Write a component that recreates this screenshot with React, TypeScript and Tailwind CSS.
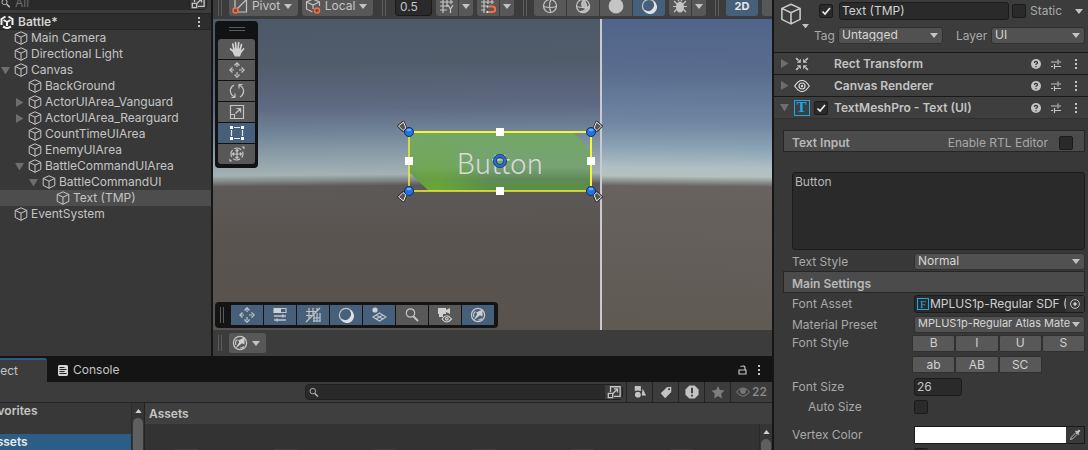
import type { ReactNode } from 'react';

const Cube = ({ className = "size-[14px]" }: { className?: string }) => (
  <svg viewBox="0 0 14 14" className={`${className} shrink-0`} fill="none" stroke="#c8c8c8" strokeLinejoin="round">
    <path d="M7 .8 12.8 3.4v7L7 13.3 1.2 10.4v-7zM1.2 3.4 7 6.2l5.8-2.8M7 6.2v7.1" />
  </svg>
);

const Down = ({ className = "w-2 text-[#c4c4c4]" }: { className?: string }) => (
  <svg viewBox="0 0 8 5" className={`${className} shrink-0`} fill="currentColor"><path d="M0 0h8L4 5z" /></svg>
);

const Fold = ({ open }: { open: boolean }) => (
  <svg viewBox="0 0 9 9" className="size-[9px] shrink-0" fill="#6e6e6e">
    <path d={open ? "M0 1h9L4.500 8.500z" : "M1 0v9l7.500-4.500z"} />
  </svg>
);

const Dots = () => (
  <svg viewBox="0 0 4 12" className="h-3 w-1 shrink-0" fill="#c4c4c4"><path d="M1 1h2v2H1zM1 5h2v2H1zM1 9h2v2H1z" /></svg>
);

const Grip = () => <div className="mx-[5px] h-4 w-1 shrink-0 border-x border-[#5c5c5c]" />;

const Icon = ({ children, className = "size-4" }: { children: ReactNode; className?: string }) => (
  <svg viewBox="0 0 16 16" className={`${className} shrink-0`} fill="none" stroke="#c4c4c4" strokeWidth="1.2">{children}</svg>
);

const Popout = () => (
  <Icon className="size-[14px]"><path d="M4 8V2h11v11H8M1.500 9.500h5v5h-5zM7 9.500 12 4.500M8 4.500h4v4" strokeWidth="1.500" /></Icon>
);

const Move = () => (
  <Icon>
    <path d="M8 2v4M8 10v4M2 8h4M10 8h4" strokeDasharray="3 1" />
    <path d="M5.500 3.500 8 .8l2.500 2.700M5.500 12.500 8 15.200l2.500-2.700M3.500 5.500.8 8l2.700 2.500M12.500 5.500 15.200 8l-2.700 2.500" />
  </Icon>
);

const Compass = () => (
  <Icon>
    <circle cx="8" cy="8" r="6.600" strokeWidth="1.300" />
    <path d="M12.500 2.500v7L10 8.200 3.500 13.500 7.200 7 6 5.500z" fill="#d0d0d0" stroke="none" />
    <path d="M4 10A4.500 4.500 0 0 1 5.500 4.500M12 11.500A5 5 0 0 1 8 13" />
  </Icon>
);

const Moon = () => (
  <Icon><circle cx="8" cy="8" r="6.600" /><path d="M12.500 3.500a6.500 6.500 0 1 1-9 9A6.500 6.500 0 0 0 12.500 3.500z" fill="#e0e0e0" stroke="#e0e0e0" /></Icon>
);

const tools = [
  { name: "View", icon: (
    <Icon>
      <path d="M5 9 3.800 3.200M7 8 6.500 1.500M9 8l.7-6.500M11 9l1.500-5.500M4.500 10.500 1.500 8M12 11l2.500-3" stroke="#d0d0d0" strokeWidth="1.700" strokeLinecap="round" />
      <path d="M4 7.500h8.200q.8 4-1.200 8H6q-2-3-2.500-5z" fill="#d0d0d0" stroke="none" />
    </Icon>
  ) },
  { name: "Move", icon: <Move /> },
  { name: "Rotate", icon: (
    <Icon><path d="M6 14A6.500 6.500 0 0 1 3 3.500L5 2M10 2a6.500 6.500 0 0 1 3 10.500L11 14M6.500 14.500H2.500M6 10.500v4M9.500 1.500h4M10 5.500v-4" /></Icon>
  ) },
  { name: "Scale", icon: (
    <Icon><path d="M1.500 1.500h13v13h-13zM1.500 10.500h4v4M6.500 9.500 11.500 4.500M7.500 4.500h4v4" /></Icon>
  ) },
  { name: "Rect", active: true, icon: (
    <Icon><path d="M5 2.500h6M5 13.500h6M2.500 5v6M13.500 5v6" stroke="#e6e6e6" /><path d="M1 1h3v3H1zM12 1h3v3h-3zM1 12h3v3H1zM12 12h3v3h-3z" fill="#fff" stroke="none" /></Icon>
  ) },
  { name: "Transform", icon: (
    <Icon><circle cx="8" cy="8" r="6" strokeDasharray="7.400 2" strokeDashoffset="3.500" /><path d="M8 3.500v9M3.500 8h9M6.500 5 8 3.500 9.500 5M6.500 11 8 12.500 9.500 11M5 6.500 3.500 8 5 9.500M11 6.500 12.500 8 11 9.500" /><path d="M12.500.5h3v3zM.5 12.500v3h3z" fill="#c4c4c4" stroke="none" /></Icon>
  ) },
];

const overlays = [
  { name: "Tools", active: true, icon: <Move /> },
  { name: "Tool Settings", active: true, icon: (
    <Icon><path d="M2 1.500h12v4H2z" /><path d="M2 1h7v5H2z" fill="#d0d0d0" stroke="none" /><path d="M2 9h12M2 13h12M11 7.500v3M5 11.500v3" strokeWidth="1.500" /></Icon>
  ) },
  { name: "Grid and Snap", active: true, icon: (
    <Icon><path d="M1 4.500h10M1 8.500h6M4 1v11M8 1v6M12 1v3M15 1 1 15M8 11h7M8 14h7M9 8v7M12 6v9M15 6v9" /></Icon>
  ) },
  { name: "Draw Modes", active: true, icon: <Moon /> },
  { name: "Gizmos", active: true, icon: (
    <Icon><circle cx="4" cy="3" r="2.600" fill="#d0d0d0" stroke="none" /><path d="M8.500 6 15 10l-6.500 4L2 10zM5 8l7 4M12 8l-7 4" /></Icon>
  ) },
  { name: "Search", active: false, icon: (
    <Icon><circle cx="6.500" cy="6" r="4.200" /><path d="m9.500 9.500 4.500 4.500" strokeWidth="2" /></Icon>
  ) },
  { name: "Cameras", active: false, icon: (
    <Icon><path d="M1 1h8v2l4-2v6L9 5v2H1zM2 7h4v3H2z" fill="#d0d0d0" stroke="none" /><path d="M5 12q4.500-6.500 9.500 0-5 6-9.500 0z" fill="#585858" stroke="#d0d0d0" /><circle cx="9.800" cy="11.800" r="1.300" stroke="#d0d0d0" /></Icon>
  ) },
  { name: "Orientation", active: true, icon: <Compass /> },
];

const shading = [
  { name: "Wireframe", active: false, icon: <Icon><circle cx="8" cy="8" r="6.500" /><path d="M1.500 8.500q6.500 2 13 0M9 1.500q-3 6.500 0 13" /></Icon> },
  { name: "Shaded Wireframe", active: false, icon: <Icon><circle cx="8" cy="8" r="6.500" /><path d="M9 1.500q-4 4-1 8 4 2 6.500-2A6.500 6.500 0 0 1 5 13.800Q12 13 11.500 7z" fill="#b5b5b5" /><path d="M1.500 8.500q6.500 2 13 0" /></Icon> },
  { name: "Unlit", active: false, icon: <Icon><circle cx="8" cy="8" r="6.800" fill="#c4c4c4" /></Icon> },
  { name: "Shaded", active: true, icon: <Moon /> },
];

const tree = [
  { name: "Main Camera", pad: "pl-0" },
  { name: "Directional Light", pad: "pl-0" },
  { name: "Canvas", pad: "pl-0", open: true },
  { name: "BackGround", pad: "pl-[14px]" },
  { name: "ActorUIArea_Vanguard", pad: "pl-[14px]", open: false },
  { name: "ActorUIArea_Rearguard", pad: "pl-[14px]", open: false },
  { name: "CountTimeUIArea", pad: "pl-[14px]" },
  { name: "EnemyUIArea", pad: "pl-[14px]" },
  { name: "BattleCommandUIArea", pad: "pl-[14px]", open: true },
  { name: "BattleCommandUI", pad: "pl-[28px]", open: true },
  { name: "Text (TMP)", pad: "pl-[42px]", selected: true },
  { name: "EventSystem", pad: "pl-0" },
];

const Hierarchy = () => (
  <section className="flex w-[211px] shrink-0 flex-col bg-[#383838]">
    <div className="flex h-[13px] items-end overflow-hidden bg-[#3c3c3c] pb-[3px]">
      <div className="flex h-4 flex-1 items-center bg-[#2a2a2a] text-[#6f6f6f]">
        <Icon className="size-3"><circle cx="6" cy="8" r="3.500" /><path d="m9 11 4 4" strokeWidth="2" /></Icon>
        <input aria-label="Search hierarchy" placeholder="All" className="w-full min-w-0 bg-transparent pl-[3px] leading-none placeholder:text-[#6f6f6f] focus:outline-none" />
      </div>
      <button aria-label="Open search" className="mr-1 flex h-4 w-[18px] items-center justify-center rounded-r border border-[#222]"><Popout /></button>
    </div>
    <div className="flex h-[17px] items-center border-y border-[#232323] bg-[#2d2d2d] pr-[10px] font-semibold text-[#d2d2d2]">
      <svg viewBox="0 0 14 14" className="size-[14px] shrink-0" fill="none" stroke="#f0f0f0" strokeWidth="2">
        <path d="M5.500 1.500 1.500 4v6M8.500 1.500l4 2.500v6M3 11.500l4 2 4-2M7 7v4M7 7 3.500 5M7 7l3.500-2" />
      </svg>
      <span className="flex-1 pl-1">Battle*</span>
      <Dots />
    </div>
    <ul>
      {tree.map((node) => (
        <li key={node.name} className={`flex h-4 items-center leading-4 ${node.pad} ${node.selected ? "bg-[#4d4d4d]" : ""}`}>
          <span className="flex w-[14px] shrink-0 pl-px">{node.open !== undefined && <Fold open={node.open} />}</span>
          <Cube />
          <span className="pl-[3px]">{node.name}</span>
        </li>
      ))}
    </ul>
  </section>
);

const SceneToolbar = () => (
  <div className="flex h-[19px] items-end overflow-hidden bg-[#3c3c3c] pb-[3px]">
    <Grip />
    <button className="ml-[2px] flex h-5 w-[69px] shrink-0 items-center justify-between rounded-[3px] bg-[#585858] pr-[6px] pl-[3px] leading-none">
      <Icon><path d="M3 1v9M6 14h8.500V1M5.500 10.500 14 2" /><circle cx="3.500" cy="12.500" r="2.500" stroke="#ff6b3d" strokeWidth="1.500" /></Icon>
      Pivot
      <Down />
    </button>
    <button className="ml-1 flex h-5 w-[71px] shrink-0 items-center justify-between rounded-[3px] bg-[#585858] pr-[6px] pl-[3px] leading-none">
      <Icon><path d="M7.500 14 1.500 11V4L8 1l6.500 3v4M1.500 4 8 7l6.500-3M8 7v4" /><circle cx="12" cy="12.500" r="2.500" stroke="#ff6b3d" strokeWidth="1.500" /></Icon>
      Local
      <Down />
    </button>
    <div className="ml-1"><Grip /></div>
    <input aria-label="Snap increment" defaultValue="0.5" className="ml-1 h-5 w-[37px] shrink-0 rounded-[3px] border border-[#1a1a1a] bg-[#2a2a2a] px-1 leading-none focus:outline-none" />
    <div className="ml-1 flex h-5 shrink-0 gap-px">
      <button aria-label="Grid" className="flex w-[22px] items-center justify-center rounded-l-[3px] bg-[#585858]">
        <Icon><path d="M1 4h13M1 8h8M1 12h7M4 1v14M8 1v8M12 1v5M9 7l2.500 4L14 7M11.500 11v4" /></Icon>
      </button>
      <button aria-label="Grid options" className="flex w-[14px] items-center justify-center rounded-r-[3px] bg-[#585858]"><Down /></button>
    </div>
    <div className="ml-1 flex h-5 shrink-0 gap-px">
      <button aria-label="Snap" className="flex w-[22px] items-center justify-center rounded-l-[3px] bg-[#585858]">
        <Icon><path d="M1 4h13M1 8h5M1 12h4M4 1v14M8 1v5M12 1v5" /><path d="M9 8.500h3.500a2.700 2.700 0 0 1 0 5.500H9" stroke="#ff6b3d" strokeWidth="2" /><path d="M6.500 7.500h2v2h-2zM6.500 13h2v2h-2z" fill="#e0e0e0" stroke="none" /></Icon>
      </button>
      <button aria-label="Snap options" className="flex w-[14px] items-center justify-center rounded-r-[3px] bg-[#585858]"><Down /></button>
    </div>
    <div className="ml-1"><Grip /></div>
    <div className="ml-[2px] flex h-5 shrink-0 gap-px overflow-hidden rounded-[3px]">
      {shading.map((mode) => (
        <button key={mode.name} aria-label={mode.name} className={`flex w-8 items-center justify-center ${mode.active ? "bg-[#46607c]" : "bg-[#585858]"}`}>{mode.icon}</button>
      ))}
    </div>
    <div className="ml-1 flex h-5 shrink-0 gap-px">
      <button aria-label="Debug" className="flex w-[22px] items-center justify-center rounded-l-[3px] bg-[#585858]">
        <Icon><path d="M2 3l3 3M14 3l-3 3M1 8.500h14M2 14l3-3M14 14l-3-3M5.500 1l1.500 2M10.500 1 9 3" /><ellipse cx="8" cy="9" rx="4" ry="5.500" fill="#c4c4c4" stroke="none" /></Icon>
      </button>
      <button aria-label="Debug options" className="flex w-[14px] items-center justify-center rounded-r-[3px] bg-[#585858]"><Down /></button>
    </div>
    <div className="ml-1"><Grip /></div>
    <button className="ml-[2px] h-5 w-8 shrink-0 rounded-[3px] bg-[#46607c] text-[11px] leading-none font-bold text-[#e6e6e6]">2D</button>
    <button aria-label="Lighting" className="ml-1 h-5 w-8 shrink-0 rounded-[3px] bg-[#585858]" />
  </div>
);

// rect tool handles around the selected button, origin at its top left corner
const Gizmo = () => (
  <svg viewBox="-14 -14 210 88" className="absolute -top-[14px] -left-[14px] h-[88px] w-[210px]" fill="none">
    <path d="M0 0h182v59H0z" stroke="#f4f03a" strokeWidth="1.500" />
    <path d="M0 0h182v59" stroke="#f8f43c" strokeWidth="2" />
    <g strokeLinejoin="round">
      <path d="M-10.500-6l5-4 2.500 6-3 2.500zM192.500-6l-5-4-2.500 6 3 2.500zM-10.500 65l5 4 2.500-6-3-2.500zM192.500 65l-5 4-2.500-6 3-2.500z" stroke="#2a2a2a" strokeWidth="2.500" />
      <path d="M-10.500-6l5-4 2.500 6-3 2.500zM192.500-6l-5-4-2.500 6 3 2.500zM-10.500 65l5 4 2.500-6-3-2.500zM192.500 65l-5 4-2.500-6 3-2.500z" fill="#555" stroke="#f0f0f0" />
    </g>
    <g fill="#1f74ea" stroke="#1b2c50">
      <circle r="4.500" /><circle cx="182" r="4.500" /><circle cy="59" r="4.500" /><circle cx="182" cy="59" r="4.500" />
    </g>
    <g fill="#6aaaf5"><ellipse cy="-2" rx="2.500" ry="1.300" /><ellipse cx="182" cy="-2" rx="2.500" ry="1.300" /><ellipse cy="57" rx="2.500" ry="1.300" /><ellipse cx="182" cy="57" rx="2.500" ry="1.300" /></g>
    <path d="M87-4h8v8h-8zM87 55h8v8h-8zM-4 25h8v8h-8zM178 25h8v8h-8z" fill="#fff" />
    <circle cx="91" cy="29" r="5" stroke="#173a78" strokeWidth="4" />
    <circle cx="91" cy="29" r="5" stroke="#2d6bc4" strokeWidth="2.500" />
  </svg>
);

const SceneView = () => (
  <div className="relative flex-1 overflow-hidden bg-[linear-gradient(180.5deg,#50648a_0px,#5a6d8f_55px,#7086a2_105px,#8ba3b5_130px,#b0c0c3_150px,#b5c1bf_158px,#8d9493_163px,#686360_168px,#66605c_200px,#5f5a54_311px)]">
    <div className="absolute inset-y-0 left-0 w-[389px] border-r-2 border-[#c9c9cf] bg-[linear-gradient(179.5deg,#4c5969_0px,#515c6b_45px,#5f6a84_90px,#718598_115px,#8fa1ab_140px,#a4b2b2_157px,#7f8584_163px,#5d5958_168px,#59544f_220px,#58534e_311px)]" />
    <div className="absolute top-[113px] left-[196px] h-[59px] w-[182px]">
      <div className="flex h-full items-center justify-center bg-[radial-gradient(circle_at_24px_60px,#6cae32cc,transparent_60px),linear-gradient(180deg,#72a765_0%,#76a274_60%,#5f8a58_80%,#5a9040_100%)] text-[28px] leading-none font-light text-[#dadada] [clip-path:polygon(0_0,164px_0,100%_19px,100%_100%,20px_100%,0_40px)]">
        <span className="font-['Noto_Sans_CJK_JP',sans-serif]">Button</span>
      </div>
      <Gizmo />
    </div>
    <div className="absolute top-[2px] left-[2px] flex w-[43px] flex-col gap-px rounded bg-[#101214] px-[3px] pb-1">
      <div className="mx-auto mt-[6px] mb-[7px] h-1 w-4 border-y border-[#5c5c5c]" />
      {tools.map((tool) => (
        <button key={tool.name} aria-label={tool.name} className={`flex h-5 items-center justify-center first-of-type:rounded-t-[3px] last-of-type:rounded-b-[3px] ${tool.active ? "bg-[#46607c]" : "bg-[#585858]"}`}>{tool.icon}</button>
      ))}
    </div>
    <div className="absolute bottom-[2px] left-[2px] flex h-[26px] items-center gap-px rounded bg-[#141414] pr-1">
      <div className="mr-px"><Grip /></div>
      {overlays.map((item) => (
        <button key={item.name} aria-label={item.name} className={`flex h-5 w-8 items-center justify-center ${item.active ? "bg-[#46607c]" : "bg-[#585858]"}`}>{item.icon}</button>
      ))}
    </div>
  </div>
);

const Scene = () => (
  <section className="flex min-w-0 flex-1 flex-col">
    <SceneToolbar />
    <SceneView />
    <div className="flex h-[26px] items-center bg-[#3c3c3c]">
      <Grip />
      <button aria-label="Orientation options" className="ml-[2px] flex h-5 w-[37px] items-center justify-between rounded-[3px] bg-[#585858] pr-[6px] pl-[3px]">
        <Compass />
        <Down />
      </button>
    </div>
  </section>
);

const ScrollBar = () => (
  <div className="flex w-[13px] shrink-0 flex-col items-center border-l border-[#2a2a2a] bg-[#353535]">
    <svg viewBox="0 0 8 5" className="mt-[6px] mb-[5px] w-[7px] shrink-0" fill="#d0d0d0"><path d="M0 5h8L4 0z" /></svg>
    <div className="w-[10px] flex-1 rounded-t-full bg-[#5f5f5f]" />
  </div>
);

const filters = [
  { name: "Search by type", icon: <Icon className="size-[14px]"><path d="M2 1h7v6H2zM11 4l4 8h-5z" fill="#c4c4c4" stroke="none" /><circle cx="5.500" cy="11" r="4" fill="#c4c4c4" stroke="#3c3c3c" /></Icon> },
  { name: "Search by label", icon: <Icon className="size-[14px]"><path d="M14 2 9 2.500 2 9.500 7 15l7-7z" fill="#c4c4c4" stroke="none" /><circle cx="11.500" cy="4.800" r="1.200" fill="#3c3c3c" stroke="none" /></Icon> },
  { name: "Search by log type", icon: <Icon className="size-[14px]"><path d="M5 .5h6L15.500 5v6L11 15.500H5L.5 11V5z" fill="#c4c4c4" stroke="none" /><path d="M8 3v6.500M8 11v2" stroke="#303030" strokeWidth="2" /></Icon> },
  { name: "Save search", icon: <Icon className="size-[14px]"><path d="m8 1 2.200 4.800 5.300.6-3.900 3.600 1 5.300L8 12.700l-4.600 2.600 1-5.300L.5 6.400l5.300-.6z" fill="#7d7d7d" stroke="none" /></Icon> },
];

const Project = () => (
  <section className="flex h-[94px] shrink-0 flex-col overflow-hidden">
    <div className="flex h-[26px] items-stretch bg-[#141414] pt-[2px]">
      <button className="flex w-[47px] items-center justify-end overflow-hidden rounded-tr-[3px] border-t-2 border-[#2c5d87] bg-[#3c3c3c] pr-[29px]">Project</button>
      <button className="flex flex-1 items-center gap-[5px] pl-[11px]">
        <svg viewBox="0 0 10 11" className="h-[11px] w-[10px]" fill="#d2d2d2"><path d="M1 0h8l1 1v9l-1 1H1l-1-1V1z" /><path d="M1.500 2.500h5M1.500 4.500h7M1.500 6.500h5M1.500 8.500h7" stroke="#222" /></svg>
        Console
      </button>
      <div className="flex items-center gap-[10px] pr-[11px]">
        <svg viewBox="0 0 9 10" className="h-[10px] w-[9px]" fill="none" stroke="#c4c4c4" strokeWidth="1.200"><path d="M1 5h7v4H1zM2.500 1.500Q7 0 7 3v2" /></svg>
        <Dots />
      </div>
    </div>
    <div className="flex h-[21px] items-stretch justify-end border-b border-[#232323] bg-[#3c3c3c]">
      <div className="my-[2px] mr-[3px] flex w-[318px] items-center rounded border border-[#212121] bg-[#2a2a2a]">
        <Icon className="mx-[2px] size-[11px]"><circle cx="7" cy="6" r="4" /><path d="m10 9.500 4.500 4.500" strokeWidth="2" /></Icon>
        <input aria-label="Search project" className="min-w-0 flex-1 bg-transparent focus:outline-none" />
        <button aria-label="Open in search" className="flex h-full w-[17px] items-center justify-center bg-[#3c3c3c]"><Popout /></button>
      </div>
      {filters.map((filter) => (
        <button key={filter.name} aria-label={filter.name} className="flex w-[26px] items-center justify-center border-l border-[#232323]">{filter.icon}</button>
      ))}
      <button className="flex w-[42px] items-center justify-center gap-[2px] border-l border-[#232323] font-medium text-[#8e8e8e]">
        <svg viewBox="0 0 14 10" className="h-[10px] w-[14px]" fill="none" stroke="#747474" strokeWidth="1.200"><path d="M.7 5q6.300-8 12.600 0-6.300 8-12.600 0z" /><circle cx="7" cy="4" r="3" fill="#747474" stroke="none" /></svg>
        22
      </button>
    </div>
    <div className="flex min-h-0 flex-1">
      <div className="w-[131px] overflow-hidden bg-[#383838] font-semibold">
        <div className="flex h-[15px] items-center"><span className="-ml-4">Favorites</span></div>
        <div className="mt-4 flex h-4 items-center bg-[#2c5d87] text-[#e8e8e8]"><span className="-ml-3">Assets</span></div>
      </div>
      <ScrollBar />
      <div className="flex min-w-0 flex-1 flex-col border-l border-[#232323] bg-[#333]">
        <div className="flex h-[21px] shrink-0 items-center bg-[#3f3f3f] pl-1 font-semibold">Assets</div>
        <div className="flex min-h-0 flex-1 justify-between">
          <div className="flex gap-[74px] overflow-hidden pt-[25px] pl-[29px]">
            {[0, 1, 2, 3, 4, 5].map((i) => <div key={i} className="h-5 w-[25px] shrink-0 rounded-t-[3px] bg-[#404040]" />)}
          </div>
          <ScrollBar />
        </div>
      </div>
    </div>
  </section>
);

const Check = ({ id, label, checked }: { id: string; label?: string; checked?: boolean }) => (
  <span className="relative flex size-[14px] shrink-0">
    <input id={id} aria-label={label} type="checkbox" defaultChecked={checked} className="peer size-[14px] appearance-none rounded-[2px] border border-[#1b1b1b] bg-[#2a2a2a]" />
    <svg viewBox="0 0 14 14" className="pointer-events-none absolute inset-0 hidden size-[14px] peer-checked:block" fill="none" stroke="#eee" strokeWidth="1.700"><path d="M3.500 7.500 6 10l5-6" /></svg>
  </span>
);

const Select = ({ id, value, className }: { id: string; value: string; className: string }) => (
  <span className={`relative flex ${className}`}>
    <select id={id} className="h-[17px] w-full appearance-none rounded-[3px] border border-[#303030] bg-[#515151] pr-[14px] pb-[2px] pl-[3px] leading-none text-[#d6d6d6]">
      <option>{value}</option>
    </select>
    <Down className="pointer-events-none absolute top-[6px] right-[5px] w-2 text-[#c4c4c4]" />
  </span>
);

const ComponentHeader = ({ title, icon, open = false, check = false }: { title: string; icon: ReactNode; open?: boolean; check?: boolean }) => (
  <div className="flex h-[22px] items-center border-t border-[#1a1a1a] bg-[#3e3e3e] pr-[10px] pl-[6px]">
    <Fold open={open} />
    <span className="flex w-[25px] justify-center">{icon}</span>
    <span className="flex w-5">{check && <Check id="enabled" label="Enable component" checked />}</span>
    <h2 className="flex-1 font-semibold">{title}</h2>
    <svg viewBox="0 0 10 10" className="size-[10px]"><circle cx="5" cy="5" r="5" fill="#c4c4c4" /><path d="M3.500 4q0-1.700 1.500-1.700T6.500 4Q6.500 4.800 5 5.300v.7M5 7v1.200" stroke="#333" strokeWidth="1.200" fill="none" /></svg>
    <svg viewBox="0 0 10 10" className="ml-[10px] size-[10px]" fill="none" stroke="#c4c4c4" strokeWidth="1.200"><path d="M0 3h6M8 3h2M7 .5v5M0 7.500h2M4 7.500h6M3.500 5v5" /></svg>
    <span className="ml-[13px] flex"><Dots /></span>
  </div>
);

const SectionTitle = ({ children }: { children: ReactNode }) => (
  <div className="flex h-[22px] items-center justify-between border border-[#262626] bg-[#4b4b4b] pt-[3px] pr-[11px] pl-2">{children}</div>
);

const Field = ({ label, htmlFor, children, className = "h-5" }: { label: string; htmlFor: string; children: ReactNode; className?: string }) => (
  <div className={`flex items-center pl-[9px] ${className}`}>
    <label htmlFor={htmlFor} className="w-[122px] shrink-0 text-[#a8a8a8]">{label}</label>
    {children}
  </div>
);

const styleButton = "h-[17px] rounded-[2px] border border-[#303030] bg-[#585858] leading-none text-[#d0d0d0]";

const Inspector = () => (
  <section className="w-[314px] shrink-0 overflow-hidden bg-[#383838]">
    <div className="flex h-[52px] bg-[#3c3c3c] pt-[2px]">
      <div className="flex w-8 shrink-0 items-start pt-px pl-[6px]">
        <Cube className="size-[22px]" />
        <Down className="mt-[21px] w-[7px] text-[#c4c4c4]" />
      </div>
      <div className="min-w-0 flex-1 pr-[3px]">
        <div className="flex h-[18px] items-center pl-[13px]">
          <Check id="active" label="Active" checked />
          <input aria-label="Name" defaultValue="Text (TMP)" className="ml-[6px] h-[18px] min-w-0 flex-1 rounded-[3px] border border-[#1b1b1b] bg-[#2a2a2a] px-[2px] text-[#d2d2d2] focus:outline-none" />
          <span className="ml-[3px] flex"><Check id="static" /></span>
          <label htmlFor="static" className="w-[49px] pl-1 text-[#a8a8a8]">Static</label>
          <span className="mr-[2px]"><Down /></span>
        </div>
        <div className="mt-[7px] flex h-[17px] items-center pl-2 leading-none text-[#a8a8a8]">
          <label htmlFor="tag" className="w-6">Tag</label>
          <Select id="tag" value="Untagged" className="flex-1" />
          <label htmlFor="layer" className="w-12 pl-[13px]">Layer</label>
          <Select id="layer" value="UI" className="w-[94px]" />
        </div>
      </div>
    </div>
    <ComponentHeader
      title="Rect Transform"
      icon={<svg viewBox="0 0 12 12" className="size-[14px]" fill="#c4c4c4" stroke="#c4c4c4"><path d="M1 1l2 2M11 1 9 3M1 11l2-2M11 11 9 9" strokeWidth="1.500" /><path d="M5 1.500V5H1.500zM7 1.500V5h3.500zM5 10.500V7H1.500zM7 10.500V7h3.500z" stroke="none" /></svg>}
    />
    <ComponentHeader
      title="Canvas Renderer"
      icon={<svg viewBox="0 0 16 12" className="h-3 w-4" fill="none" stroke="#dcdcdc" strokeWidth="1.200"><path d="M.7 6Q8-5 15.300 6 8 17 .7 6z" /><circle cx="8" cy="6" r="3" /><circle cx="8" cy="6" r="1.200" fill="#dcdcdc" stroke="none" /></svg>}
    />
    <ComponentHeader
      title="TextMeshPro - Text (UI)"
      open
      check
      icon={<span className="flex size-4 items-center justify-center border border-[#1ea7e8] font-['Liberation_Serif',serif] text-[15px] leading-none font-bold text-[#1ea7e8]">T</span>}
    />
    <div className="border-t border-[#303030] pt-[11px] pr-[3px] pl-[9px]">
      <SectionTitle>
        <h3 className="font-semibold text-[#b8b8b8]">Text Input</h3>
        <span className="flex items-center gap-[11px] text-[#a8a8a8]">
          <label htmlFor="rtl">Enable RTL Editor</label>
          <Check id="rtl" />
        </span>
      </SectionTitle>
      <div className="flex pt-5 pb-[2px] pl-[9px]">
        <textarea aria-label="Text Input" defaultValue="Button" className="h-[78px] w-full resize-none rounded-[3px] border border-[#1b1b1b] bg-[#2a2a2a] px-[2px] pt-px leading-4 text-[#b8b8b8] focus:outline-none" />
      </div>
      <Field label="Text Style" htmlFor="text-style" className="h-[19px]">
        <Select id="text-style" value="Normal" className="flex-1" />
      </Field>
      <SectionTitle><h3 className="font-semibold text-[#b8b8b8]">Main Settings</h3></SectionTitle>
      <Field label="Font Asset" htmlFor="font-asset" className="h-[22px]">
        <div className="flex h-[18px] min-w-0 flex-1 items-center rounded-[3px] border border-[#1b1b1b] bg-[#2a2a2a] pl-[2px]">
          <span className="flex size-3 shrink-0 items-center justify-center border border-[#1ea7e8] font-['Liberation_Serif',serif] text-[11px] leading-none text-[#1ea7e8]">F</span>
          <input id="font-asset" defaultValue="MPLUS1p-Regular SDF (TMP_Font Asset)" className="min-w-0 flex-1 bg-transparent pl-px text-[#d0d0d0] focus:outline-none" />
          <button aria-label="Pick font asset" className="flex h-full w-[18px] shrink-0 items-center justify-center bg-[#373737]">
            <svg viewBox="0 0 10 10" className="size-[10px]" fill="none" stroke="#c4c4c4"><circle cx="5" cy="5" r="4.400" /><circle cx="5" cy="5" r="1.300" fill="#c4c4c4" /></svg>
          </button>
        </div>
      </Field>
      <Field label="Material Preset" htmlFor="material" className="h-[19px]">
        <Select id="material" value="MPLUS1p-Regular Atlas Material" className="min-w-0 flex-1 text-[11px]" />
      </Field>
      <div className="flex h-[18px] items-center pl-[9px]">
        <span className="w-[120px] shrink-0 text-[#a8a8a8]">Font Style</span>
        <div className="grid flex-1 grid-cols-4">
          <button className={styleButton}>B</button>
          <button className={styleButton}>I</button>
          <button className={styleButton}>U</button>
          <button className={styleButton}>S</button>
        </div>
      </div>
      <div className="mt-1 mb-1 grid grid-cols-4 pl-[129px]">
        <button className={styleButton}>ab</button>
        <button className={styleButton}>AB</button>
        <button className={styleButton}>SC</button>
      </div>
      <Field label="Font Size" htmlFor="font-size">
        <input id="font-size" defaultValue="26" className="h-[18px] w-12 rounded-[3px] border border-[#1b1b1b] bg-[#2a2a2a] px-[2px] text-[#c4c4c4] focus:outline-none" />
      </Field>
      <div className="flex h-5 items-center pl-[25px]">
        <label htmlFor="auto-size" className="w-[106px] text-[#a8a8a8]">Auto Size</label>
        <Check id="auto-size" />
      </div>
      <Field label="Vertex Color" htmlFor="vertex" className="mt-2 h-5">
        <div className="flex h-[18px] flex-1 items-center border border-[#1b1b1b]">
          <button id="vertex" aria-label="White" className="h-full flex-1 bg-white" />
          <button aria-label="Pick color" className="flex w-[18px] justify-center">
            <Icon className="size-3"><path d="M2 14l1-3 6-6 2 2-6 6z" /><path d="m8 3 5 5 1-1-1.500-1.500L15 3q.5-2-2-2l-2.500 2L9 2z" fill="#c4c4c4" stroke="none" /></Icon>
          </button>
        </div>
      </Field>
      <div className="flex pt-[3px] pl-[131px]"><Check id="gradient" label="Color Gradient" /></div>
    </div>
  </section>
);

const App = () => (
  <main className="flex h-screen gap-[2px] overflow-hidden bg-[#161616] font-['Inter',sans-serif] text-[12px] text-[#c4c4c4]">
    <div className="flex min-w-0 flex-1 flex-col">
      <div className="flex min-h-0 flex-1 gap-[2px]">
        <Hierarchy />
        <Scene />
      </div>
      <Project />
    </div>
    <Inspector />
  </main>
);

export default App;
